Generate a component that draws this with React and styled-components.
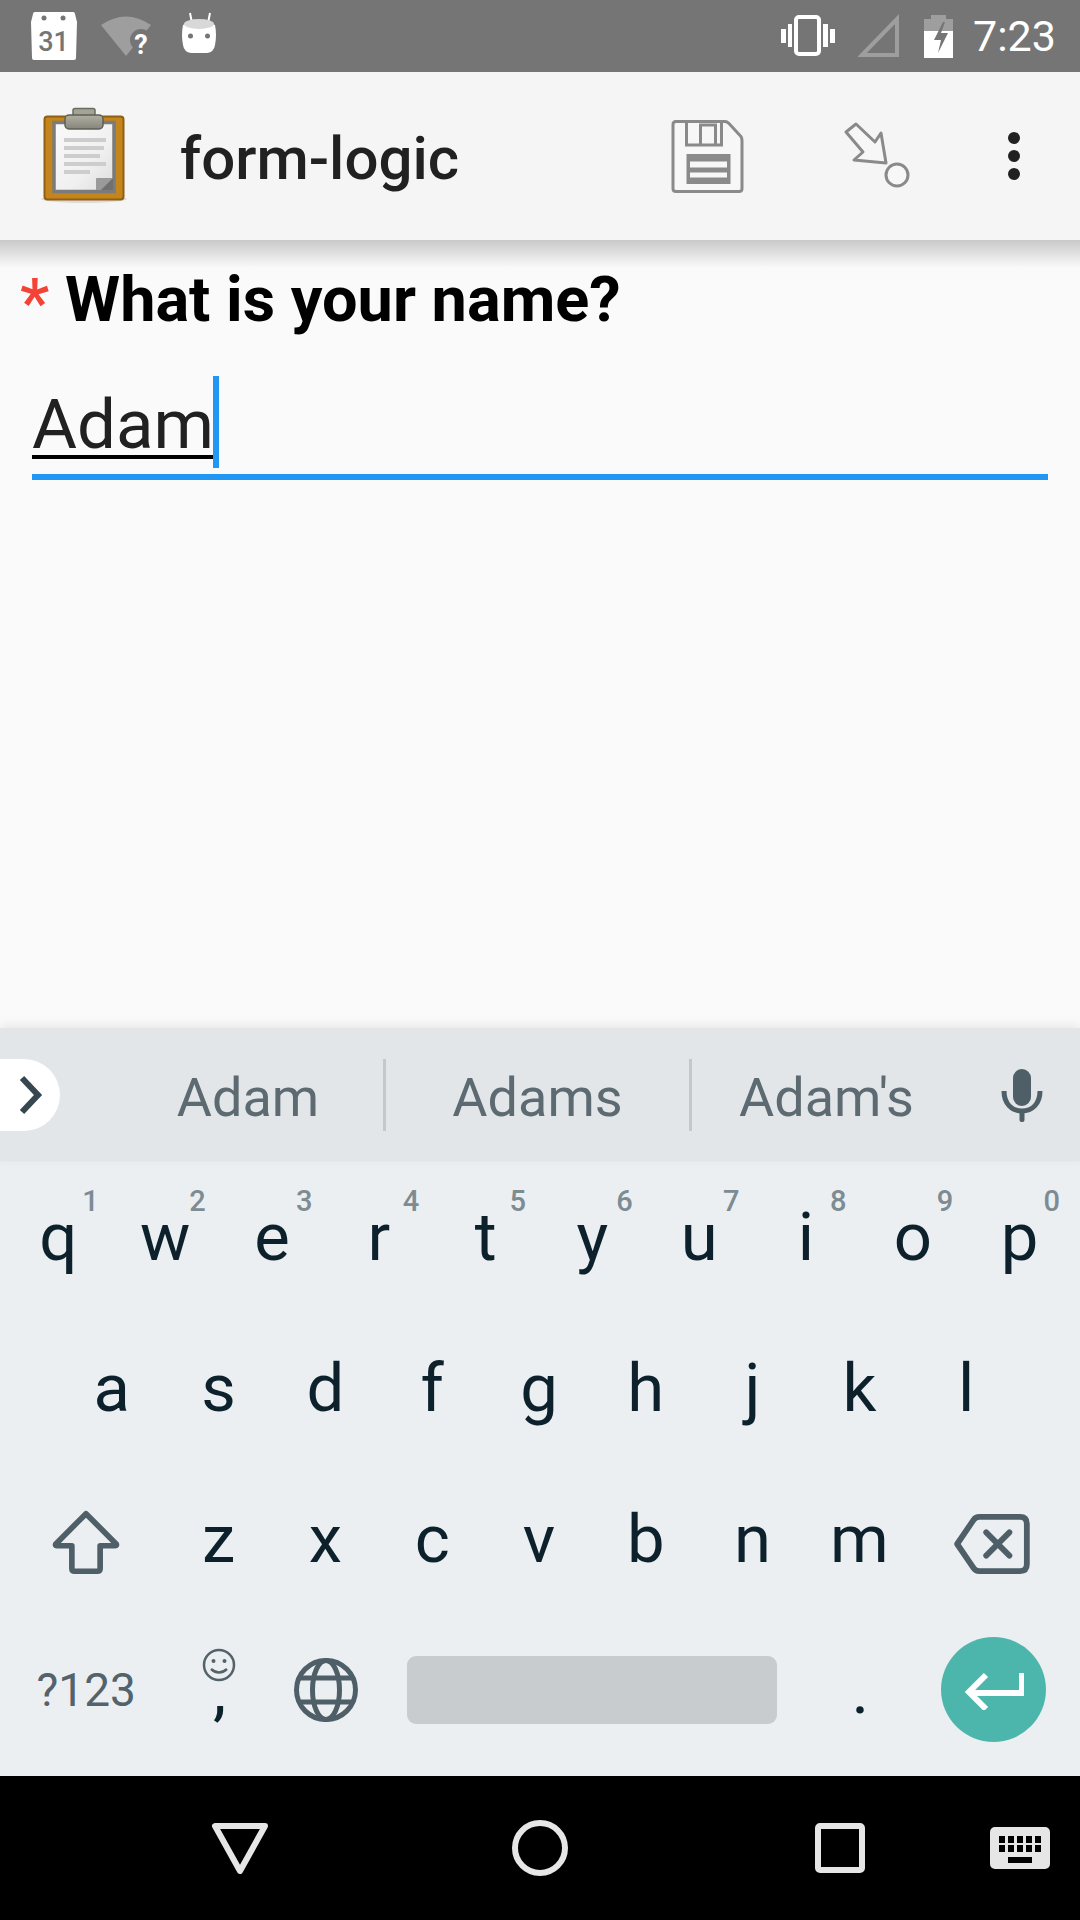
import styled, { createGlobalStyle } from "styled-components";

const GlobalStyle = createGlobalStyle`
  html, body {
    margin: 0;
    padding: 0;
    background: #fafafa;
  }
  * {
    box-sizing: border-box;
  }
`;

const Screen = styled.div`
  width: 1080px;
  height: 1920px;
  display: flex;
  flex-direction: column;
  font-family: Roboto, "Liberation Sans", sans-serif;
  overflow: hidden;
`;

const StatusBar = styled.div`
  height: 72px;
  flex: none;
  display: flex;
  align-items: center;
  background: #757575;
`;

const StatusTime = styled.span`
  margin-left: 18px;
  font-size: 43px;
  line-height: 72px;
  color: #fff;
`;

// icons keep the screen's own coordinates in their viewBox, bar height tall
const BarIcon = styled.svg`
  display: block;
  flex: none;
  margin-left: ${(p) => p.$gap || 0}px;
`;

const AppBar = styled.div`
  height: 168px;
  flex: none;
  display: flex;
  align-items: center;
  background: #f5f5f5;
`;

const AppTitle = styled.h1`
  margin: 5px 0 0 53px;
  width: 490px;
  font-size: 60px;
  font-weight: 500;
  line-height: 70px;
  color: #212121;
`;

const Main = styled.main`
  flex: 1;
  background: #fafafa;
`;

const BarShadow = styled.div`
  height: 28px;
  background: linear-gradient(#c9c9c9, #fafafa);
`;

const Question = styled.div`
  display: flex;
  margin-left: 20px;
  height: 63px;
  font-size: 63px;
  line-height: 63px;
  font-weight: 700;
  color: #000;
`;

const Required = styled.span`
  width: 45px;
  flex: none;
  margin-top: 3px;
  font-size: 66px;
  line-height: 66px;
  font-weight: 500;
  color: #f44336;
`;

const Field = styled.div`
  margin: 60px 32px 0;
  border-bottom: 6px solid #2196f3;
  padding-bottom: 15px;
  height: 89px;
`;

const FieldValue = styled.span`
  display: inline-block;
  position: relative;
  height: 68px;
  border-bottom: 4px solid #000;
  font-size: 69px;
  line-height: 68px;
  color: #212121;
`;

const Caret = styled.i`
  position: absolute;
  left: calc(100% - 1px);
  top: -15px;
  width: 6px;
  height: 92px;
  background: #2196f3;
`;

const SuggestionStrip = styled.div`
  height: 133px;
  flex: none;
  display: flex;
  align-items: center;
  background: #e2e6e9;
  box-shadow: 0 -3px 10px rgba(0, 0, 0, 0.08);
  position: relative;
`;

const ExpandTab = styled.div`
  width: 60px;
  height: 72px;
  flex: none;
  display: flex;
  align-items: center;
  background: #fff;
  border-radius: 0 36px 36px 0;
`;

const Suggestion = styled.div`
  flex: none;
  width: ${(p) => p.$width}px;
  height: 72px;
  padding-left: ${(p) => p.$inset || 0}px;
  border-right: ${(p) => (p.$divider ? "3px solid #c3c8cb" : "none")};
  font-size: 54px;
  line-height: 78px;
  text-align: center;
  color: #5d6a72;
`;

const Keyboard = styled.div`
  height: 615px;
  flex: none;
  padding: 0 6px 11px;
  background: #eceff2;
`;

const KeyRow = styled.div`
  height: 151px;
  display: flex;
  justify-content: center;
`;

const Key = styled.div`
  position: relative;
  flex: none;
  width: ${(p) => (p.$wide ? 160.2 : p.$space ? 427 : 106.8)}px;
  padding-right: ${(p) => (p.$letter ? 2 : 0)}px;
  display: flex;
  align-items: center;
  justify-content: center;
  font-size: 67px;
  line-height: 66px;
  color: #0c212c;
`;

const Hint = styled.span`
  position: absolute;
  top: 24px;
  right: 14px;
  font-size: 29px;
  line-height: 32px;
  font-weight: 500;
  color: #7d8b93;
`;

const ModeLabel = styled.span`
  font-size: 46px;
  color: #53626b;
`;

const SpaceBar = styled.div`
  width: 370px;
  height: 68px;
  margin-right: 3px;
  background: #c8cccf;
  border-radius: 9px;
`;

const EnterButton = styled.div`
  width: 105px;
  height: 105px;
  border-radius: 50%;
  background: #4db6ac;
  display: flex;
  align-items: center;
  justify-content: center;
`;

const SmileyHint = styled.svg`
  position: absolute;
  top: 34px;
  left: 36px;
`;

const NavBar = styled.nav`
  height: 144px;
  flex: none;
  display: grid;
  grid-template-columns: repeat(3, 300px) 60px;
  padding-left: 90px;
  align-items: center;
  justify-items: center;
  background: #000;
`;

const rows = [
  ["q", "w", "e", "r", "t", "y", "u", "i", "o", "p"],
  ["a", "s", "d", "f", "g", "h", "j", "k", "l"],
  ["z", "x", "c", "v", "b", "n", "m"],
];
const digits = "1234567890";

function StatusLeft() {
  return (
    <>
      <BarIcon $gap={31} width="46" height="72" viewBox="31 0 46 72">
        <path
          d="M35 12h38q2 0 2 2l2 8-1 36q0 2-2 2H34q-2 0-2-2l-1-36 2-8q0-2 2-2z"
          fill="#fff"
        />
        <circle cx="44" cy="18" r="2.5" fill="#757575" />
        <circle cx="63" cy="18" r="2.5" fill="#757575" />
        <text
          x="53.5"
          y="51"
          textAnchor="middle"
          fontFamily="Roboto, sans-serif"
          fontWeight="500"
          fontSize="27"
          fill="#757575"
        >
          31
        </text>
      </BarIcon>
      <BarIcon $gap={24} width="50" height="72" viewBox="101 0 50 72">
        <path d="M101 25Q126 8 151 25L126 56z" fill="#9e9e9e" />
        <circle cx="141" cy="40" r="11" fill="#757575" />
        <text
          x="141"
          y="54"
          textAnchor="middle"
          fontFamily="Roboto, sans-serif"
          fontWeight="700"
          fontSize="27"
          fill="#fff"
        >
          ?
        </text>
      </BarIcon>
      <BarIcon $gap={30} width="36" height="72" viewBox="180 0 36 72">
        <path d="M189 13l2 10M209 13l-2 10" stroke="#fff" strokeWidth="2" />
        <path
          d="M182 25q16-9 32 0 2 10 0 20-1 7-8 8h-16q-7-1-8-8-2-10 0-20z"
          fill="#fff"
        />
        <ellipse cx="198" cy="24" rx="15" ry="5" fill="#d8d8d8" />
        <circle cx="189.500" cy="36" r="2.500" fill="#757575" />
        <circle cx="206.500" cy="36" r="2.500" fill="#757575" />
      </BarIcon>
    </>
  );
}

function StatusRight() {
  return (
    <>
      <BarIcon $gap={564} width="56" height="72" viewBox="780 0 56 72">
        <rect x="795" y="17" width="23" height="37" rx="3" fill="none" stroke="#fff" strokeWidth="4" />
        <path d="M780 29h5v14h-5zM787 24h4v23h-4zM822 24h5v23h-5zM829 29h5v14h-5z" fill="#fff" />
      </BarIcon>
      <BarIcon $gap={21} width="42" height="72" viewBox="857 0 42 72">
        <path d="M861 55L896 19v36z" fill="none" stroke="#9e9e9e" strokeWidth="4" />
      </BarIcon>
      <BarIcon $gap={24} width="31" height="72" viewBox="923 0 31 72">
        <path d="M930 15h15v4h7v13h-29V19h7z" fill="#9e9e9e" />
        <path d="M923 31h29v27h-29z" fill="#fff" />
        <path d="M942 22l-9 18h7l-3 13 10-20h-7l4-11z" fill="#757575" />
      </BarIcon>
      <StatusTime>7:23</StatusTime>
    </>
  );
}

function ClipboardLogo() {
  return (
    <BarIcon $gap={40} width="87" height="168" viewBox="40 72 87 168">
      <defs>
        <linearGradient id="paper" x1="0" y1="0" x2="1" y2="1">
          <stop offset="0" stopColor="#fafafa" />
          <stop offset="0.6" stopColor="#f0f0f0" />
          <stop offset="1" stopColor="#dcdcdc" />
        </linearGradient>
        <linearGradient id="clip" x1="0" y1="0" x2="0" y2="1">
          <stop offset="0" stopColor="#b0b0a2" />
          <stop offset="1" stopColor="#85857a" />
        </linearGradient>
      </defs>
      <ellipse cx="84" cy="199" rx="43" ry="4" fill="#dcdcdc" />
      <rect x="44.500" y="116.500" width="79" height="83" rx="3" fill="#c4851c" stroke="#8f5f12" strokeWidth="2" />
      <rect x="54" y="122.500" width="60" height="69" fill="url(#paper)" stroke="#7b7b7b" strokeWidth="3.500" />
      <path d="M96 190v-11q0-1 1-1h16v12z" fill="#9a9a9a" />
      <path d="M101 190l12-12v12z" fill="#555" opacity="0.6" />
      <g fill="#cdcdcd">
        <rect x="64" y="138" width="42" height="4" />
        <rect x="64" y="146" width="40" height="4" />
        <rect x="64" y="154" width="36" height="4" />
        <rect x="64" y="162" width="42" height="4" />
        <rect x="64" y="170" width="26" height="4" />
      </g>
      <rect x="73" y="108.500" width="22" height="10" rx="2" fill="#a3a396" stroke="#6b6b62" strokeWidth="1.500" />
      <rect x="65" y="115" width="38" height="14" rx="4" fill="url(#clip)" stroke="#5f5f58" strokeWidth="1.500" />
    </BarIcon>
  );
}

function AppActions() {
  return (
    <>
      <BarIcon width="76" height="168" viewBox="670 72 76 168">
        <path
          d="M676 121.500h49q2 0 4 2l12 13q1 2 1 4v48q0 3-3 3h-63q-3 0-3-3v-64q0-3 3-3z"
          fill="#f7f7f7"
          stroke="#8a8a8a"
          strokeWidth="3"
        />
        <path d="M686.500 122v23h35v-23M700.500 125h15v20h-15z" fill="none" stroke="#8a8a8a" strokeWidth="3" />
        <rect x="686.500" y="154" width="44" height="30" fill="#8a8a8a" />
        <rect x="690" y="161.500" width="37" height="6" fill="#f7f7f7" />
        <rect x="690" y="172.500" width="37" height="5" fill="#f7f7f7" />
      </BarIcon>
      <BarIcon $gap={95} width="72" height="168" viewBox="841 72 72 168">
        <path
          d="M846 132l10-8 19 18 6-9 5 30-32-3 9-8z"
          fill="#f7f7f7"
          stroke="#8a8a8a"
          strokeWidth="3"
          strokeLinejoin="round"
        />
        <circle cx="897" cy="175" r="11" fill="#f7f7f7" stroke="#8a8a8a" strokeWidth="3" />
      </BarIcon>
      <BarIcon $gap={94} width="14" height="168" viewBox="1007 72 14 168">
        <g fill="#212121">
          <circle cx="1014" cy="138" r="6" />
          <circle cx="1014" cy="156" r="6" />
          <circle cx="1014" cy="174" r="6" />
        </g>
      </BarIcon>
    </>
  );
}

function Suggestions() {
  return (
    <SuggestionStrip>
      <ExpandTab>
        <svg width="60" height="72" viewBox="0 0 60 72">
          <path d="M22 19l16 17-16 17" fill="none" stroke="#37474f" strokeWidth="6" />
        </svg>
      </ExpandTab>
      <Suggestion $width={326} $inset={53} $divider>
        Adam
      </Suggestion>
      <Suggestion $width={306} $divider>
        Adams
      </Suggestion>
      <Suggestion $width={269}>Adam's</Suggestion>
      <svg width="42" height="56" viewBox="0 0 42 56" style={{ marginLeft: 40 }}>
        <rect x="12" y="2" width="18" height="37" rx="9" fill="#4f5f68" />
        <path d="M3 24c0 13 8 20 18 20s18-7 18-20" fill="none" stroke="#4f5f68" strokeWidth="5" />
        <rect x="18.500" y="42" width="5" height="13" rx="2" fill="#4f5f68" />
      </svg>
    </SuggestionStrip>
  );
}

function KeyboardKeys() {
  return (
    <Keyboard>
      <KeyRow>
        {rows[0].map((k, i) => (
          <Key key={k} $letter>
            {k}
            <Hint>{digits[i]}</Hint>
          </Key>
        ))}
      </KeyRow>
      <KeyRow>
        {rows[1].map((k) => (
          <Key key={k} $letter>
            {k}
          </Key>
        ))}
      </KeyRow>
      <KeyRow>
        <Key $wide>
          <svg width="68" height="66" viewBox="0 0 72 70" style={{ marginTop: 6 }}>
            <path
              d="M36 5L4 37q-1 2 1 2h16v24q0 3 3 3h24q3 0 3-3V39h16q2 0 1-2z"
              fill="none"
              stroke="#4f5f68"
              strokeWidth="6"
              strokeLinejoin="round"
            />
          </svg>
        </Key>
        {rows[2].map((k) => (
          <Key key={k} $letter>
            {k}
          </Key>
        ))}
        <Key $wide>
          <svg width="76" height="60" viewBox="0 0 78 62" style={{ marginTop: 10, marginRight: 4 }}>
            <path
              d="M3 31L20 6q2-3 6-3h42q7 0 7 7v42q0 7-7 7H26q-4 0-6-3z"
              fill="none"
              stroke="#4f5f68"
              strokeWidth="6"
              strokeLinejoin="round"
            />
            <path d="M33 19l24 24M57 19L33 43" stroke="#4f5f68" strokeWidth="6" strokeLinecap="round" />
          </svg>
        </Key>
      </KeyRow>
      <KeyRow>
        <Key $wide>
          <ModeLabel>?123</ModeLabel>
        </Key>
        <Key>
          <SmileyHint width="34" height="34" viewBox="0 0 34 34">
            <circle cx="17" cy="17" r="15" fill="none" stroke="#53626b" strokeWidth="2.500" />
            <circle cx="11.500" cy="13" r="2" fill="#53626b" />
            <circle cx="22.500" cy="13" r="2" fill="#53626b" />
            <path d="M9 21q8 7 16 0" fill="none" stroke="#53626b" strokeWidth="2.500" />
          </SmileyHint>
          ,
        </Key>
        <Key>
          <svg width="66" height="66" viewBox="0 0 66 66" fill="none" stroke="#4f5f68" strokeWidth="5">
            <circle cx="33" cy="33" r="29.500" />
            <ellipse cx="33" cy="33" rx="13.500" ry="29.500" />
            <path d="M5 21h56M5 45h56" />
          </svg>
        </Key>
        <Key $space>
          <SpaceBar />
        </Key>
        <Key>.</Key>
        <Key $wide>
          <EnterButton>
            <svg width="60" height="40" viewBox="0 0 60 40" fill="none" stroke="#fff" strokeWidth="6">
              <path d="M58 3v20H6" />
              <path d="M22 5L5 22l17 17" />
            </svg>
          </EnterButton>
        </Key>
      </KeyRow>
    </Keyboard>
  );
}

function Navigation() {
  return (
    <NavBar>
      <svg width="58" height="52" viewBox="0 0 58 52">
        <path
          d="M4 4h50L29 49z"
          fill="none"
          stroke="#e6e6e6"
          strokeWidth="6"
          strokeLinejoin="round"
        />
      </svg>
      <svg width="58" height="58" viewBox="0 0 58 58">
        <circle cx="29" cy="29" r="25" fill="none" stroke="#e6e6e6" strokeWidth="6" />
      </svg>
      <svg width="50" height="50" viewBox="0 0 50 50">
        <rect x="3" y="3" width="44" height="44" rx="2" fill="none" stroke="#e6e6e6" strokeWidth="6" />
      </svg>
      <svg width="60" height="42" viewBox="0 0 60 42">
        <rect width="60" height="42" rx="5" fill="#e6e6e6" />
        <g fill="#000">
          {[9, 18, 27, 36, 45].map((x) => (
            <rect key={x} x={x} y="9" width="6" height="7" />
          ))}
          {[9, 18, 27, 36, 45].map((x) => (
            <rect key={x} x={x} y="18" width="6" height="7" />
          ))}
          <rect x="18" y="30" width="24" height="6" />
        </g>
      </svg>
    </NavBar>
  );
}

export default function App() {
  return (
    <Screen>
      <GlobalStyle />
      <StatusBar>
        <StatusLeft />
        <StatusRight />
      </StatusBar>
      <AppBar>
        <ClipboardLogo />
        <AppTitle>form-logic</AppTitle>
        <AppActions />
      </AppBar>
      <Main>
        <BarShadow />
        <Question>
          <Required>*</Required>
          What is your name?
        </Question>
        <Field>
          <FieldValue>
            Adam
            <Caret />
          </FieldValue>
        </Field>
      </Main>
      <Suggestions />
      <KeyboardKeys />
      <Navigation />
    </Screen>
  );
}
